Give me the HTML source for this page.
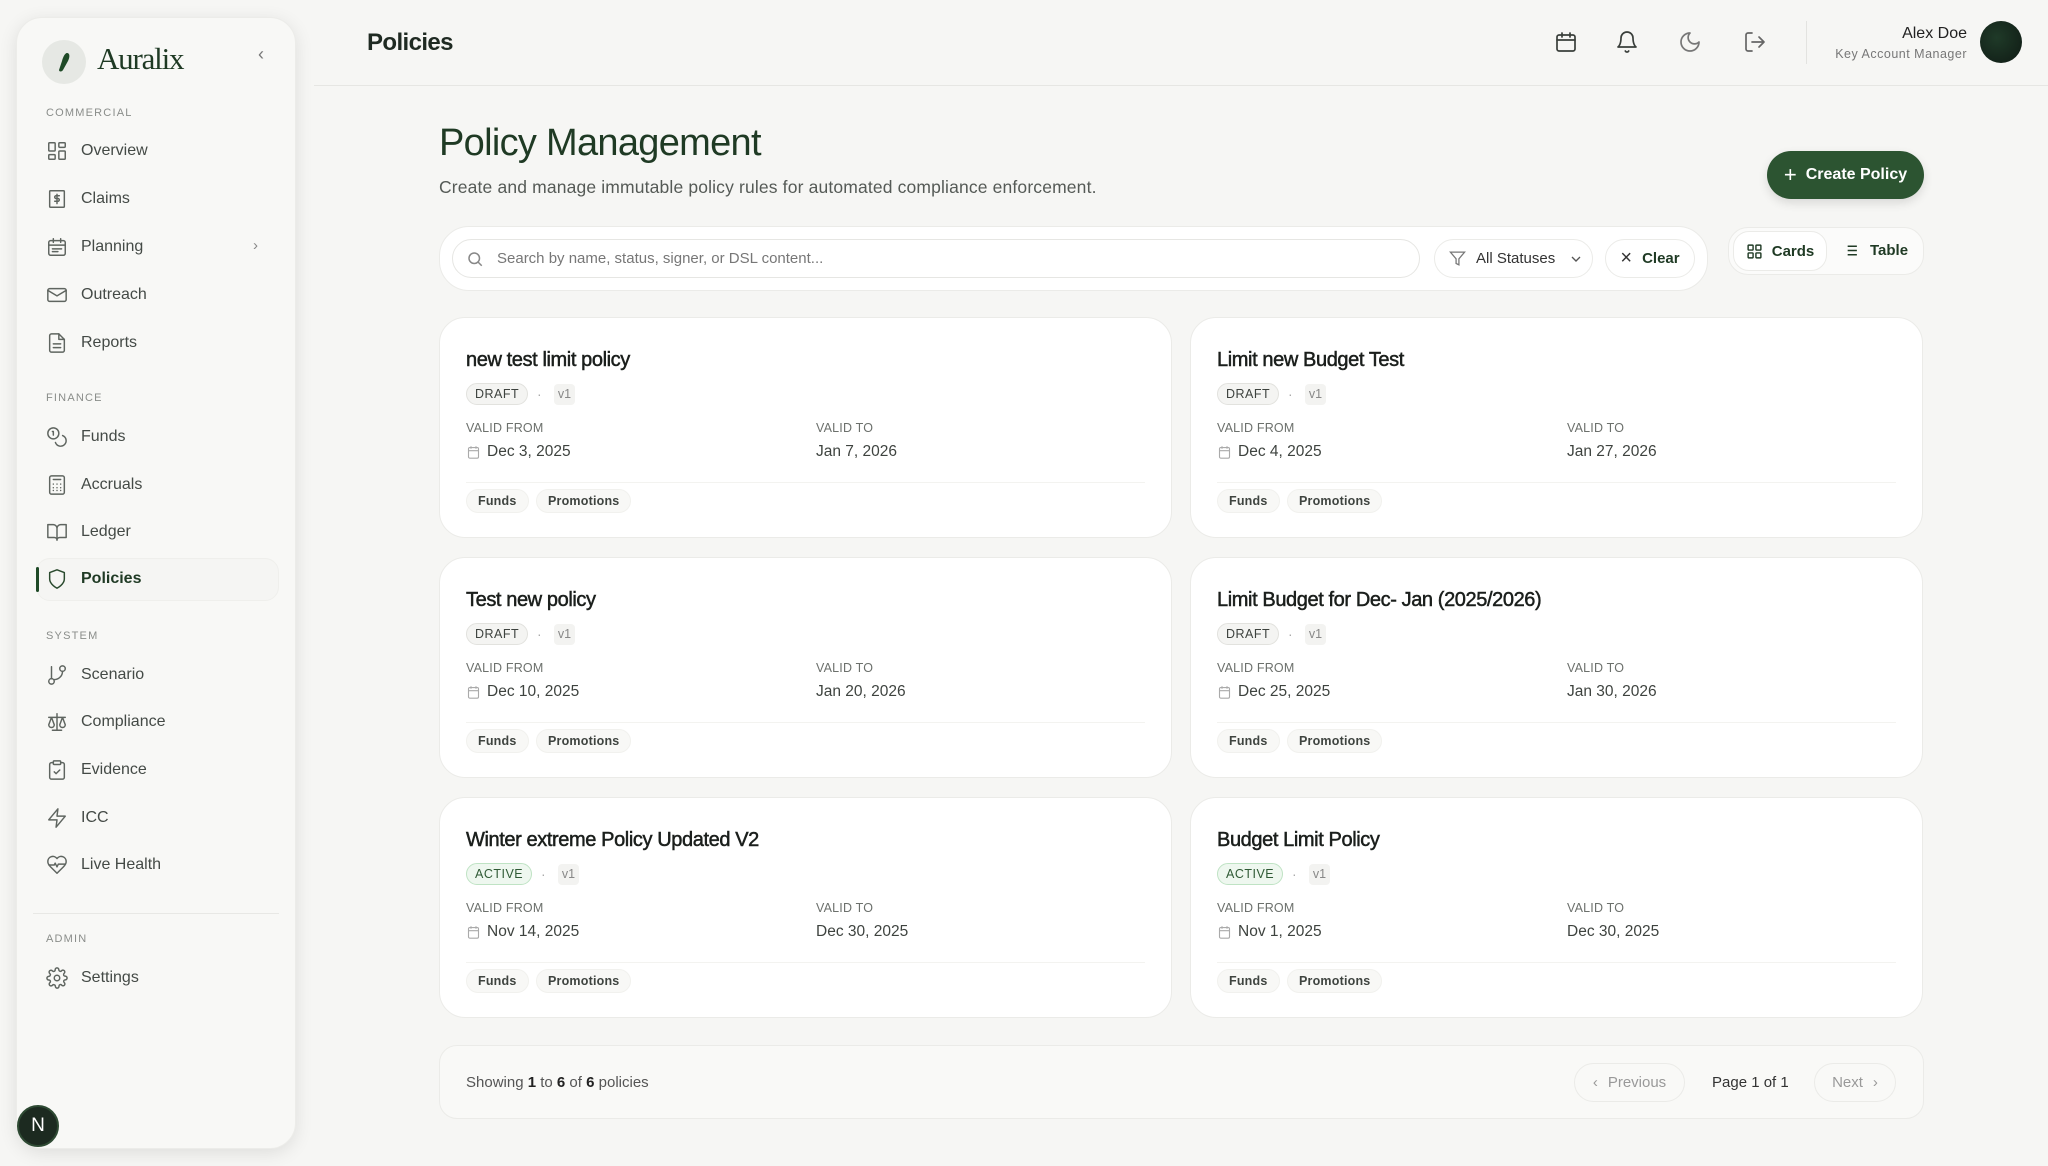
<!DOCTYPE html>
<html><head><meta charset="utf-8"><style>
*{box-sizing:border-box;margin:0;padding:0}
body{width:2048px;height:1166px;background:#f6f6f4;font-family:"Liberation Sans",sans-serif;color:#2b2f2c;position:relative;overflow:hidden}
.abs{position:absolute}
.side{left:16px;top:17px;width:280px;height:1132px;background:#f8f8f6;border-radius:26px;box-shadow:0 4px 18px rgba(0,0,0,.10);border:1px solid #ecece9}
.sec{position:absolute;left:46px;font-size:11px;letter-spacing:1.2px;color:#8a8d8a}
.item{position:absolute;left:46px;height:30px;display:flex;align-items:center;font-size:16px;color:#444a46}
.item svg{width:22px;height:22px;margin-right:13px;stroke:#5f6560;fill:none;stroke-width:1.6;stroke-linecap:round;stroke-linejoin:round}
.hdr{left:314px;top:0;width:1734px;height:86px;border-bottom:1px solid #e6e6e3}
.hicon{position:absolute;top:30px;width:24px;height:24px;fill:none;stroke:#3a3f3b;stroke-width:1.7;stroke-linecap:round;stroke-linejoin:round}
.card{position:absolute;width:733px;height:221px;background:#fff;border:1px solid #ebebe8;border-radius:26px}
.card h3{position:absolute;left:26px;top:31px;font-size:20px;font-weight:normal;color:#1b1f1c;letter-spacing:-.4px;-webkit-text-stroke:.5px #1b1f1c}
.badge{position:absolute;left:26px;top:65px;height:22px;padding:0 8px;border-radius:11px;font-size:12.5px;line-height:20px;letter-spacing:.5px;background:#f4f4f2;border:1px solid #e2e2de;color:#3d423e}
.badge.act{background:#eef7ef;border-color:#bfe3c4;color:#2f5a35}
.dot{position:absolute;top:68px;font-size:14px;color:#aaa}
.ver{position:absolute;top:66px;height:21px;width:21px;background:#f3f3f1;border-radius:4px;font-size:12.5px;color:#888;text-align:center;line-height:20px}
.lbl{position:absolute;top:103px;font-size:12.5px;color:#6c706c;letter-spacing:.2px}
.date{position:absolute;top:125px;font-size:15.5px;color:#3e433f;display:flex;align-items:center}
.date svg{width:15px;height:15px;margin-right:6px;fill:none;stroke:#aaa;stroke-width:1.8}
.hr{position:absolute;left:26px;right:26px;top:164px;border-top:1px solid #f3f3f0}
.tag{position:absolute;top:171px;height:24px;padding:0 11px;border-radius:12px;background:#f8f8f6;border:1px solid #f1f1ee;font-size:12.5px;line-height:22px;color:#3f4440;font-weight:bold;letter-spacing:.2px}
.btn{position:absolute;border:1px solid #ebebe8;background:#fff;border-radius:20px;display:flex;align-items:center;justify-content:center;font-size:15px}
</style></head><body>

<div class="abs side">
  <div class="abs" style="left:25px;top:22px;width:44px;height:44px;border-radius:50%;background:#e6e8e4"></div>
  <svg class="abs" style="left:34px;top:31px" width="26" height="26" viewBox="0 0 26 26"><path d="M16 4c3 0 3 4 1 8l-5 9c-1 2-4 2-4 0l3-9c1-4 3-8 5-8z" fill="#1f4a27"/></svg>
  <div class="abs" style="left:80px;top:23px;font-family:'Liberation Serif',serif;font-size:31px;color:#1f3a24;letter-spacing:-1.2px">Auralix</div>
  <div class="abs" style="left:241px;top:26px;font-size:18px;color:#777">‹</div>

  <div class="sec" style="top:89px;left:29px">COMMERCIAL</div>
  <div class="item" style="left:29px;top:118px"><svg viewBox="0 0 24 24"><rect x="3" y="3" width="7" height="9" rx="1"/><rect x="14" y="3" width="7" height="5" rx="1"/><rect x="14" y="12" width="7" height="9" rx="1"/><rect x="3" y="16" width="7" height="5" rx="1"/></svg>Overview</div>
  <div class="item" style="left:29px;top:166px"><svg viewBox="0 0 24 24"><rect x="4" y="3" width="16" height="18" rx="1"/><path d="M14.5 8.5h-3.5a1.5 1.5 0 0 0 0 3h2a1.5 1.5 0 0 1 0 3h-3.5M12 7v10"/></svg>Claims</div>
  <div class="item" style="left:29px;top:214px"><svg viewBox="0 0 24 24"><rect x="3" y="5" width="18" height="16" rx="2"/><path d="M8 3v4M16 3v4M3 10h18M7 14h10M7 17h6"/></svg>Planning</div>
  <div class="abs" style="left:236px;top:219px;font-size:15px;color:#888">›</div>
  <div class="item" style="left:29px;top:262px"><svg viewBox="0 0 24 24"><rect x="2" y="5" width="20" height="14" rx="2"/><path d="M2 7l10 6 10-6"/></svg>Outreach</div>
  <div class="item" style="left:29px;top:310px"><svg viewBox="0 0 24 24"><path d="M14 2H6a2 2 0 0 0-2 2v16a2 2 0 0 0 2 2h12a2 2 0 0 0 2-2V8z"/><path d="M14 2v6h6M8 13h8M8 17h8"/></svg>Reports</div>

  <div class="sec" style="top:374px;left:29px">FINANCE</div>
  <div class="item" style="left:29px;top:404px"><svg viewBox="0 0 24 24"><circle cx="8" cy="8" r="6"/><path d="M18.1 10.4A6 6 0 1 1 10.3 18M7 6h1v4"/></svg>Funds</div>
  <div class="item" style="left:29px;top:452px"><svg viewBox="0 0 24 24"><rect x="4" y="2" width="16" height="20" rx="2"/><path d="M8 6h8M8 11h.01M12 11h.01M16 11h.01M8 15h.01M12 15h.01M16 15h.01M8 18h.01M12 18h.01M16 18h.01"/></svg>Accruals</div>
  <div class="item" style="left:29px;top:499px"><svg viewBox="0 0 24 24"><path d="M2 4h6a4 4 0 0 1 4 4v13a3 3 0 0 0-3-3H2zM22 4h-6a4 4 0 0 0-4 4v13a3 3 0 0 1 3-3h7z"/></svg>Ledger</div>
  <div class="abs" style="left:19px;top:540px;width:243px;height:43px;border-radius:14px;background:#f5f5f3;border:1px solid #efefec"></div>
  <div class="abs" style="left:19px;top:549px;width:3px;height:25px;background:#1f4a27;border-radius:2px"></div>
  <div class="item" style="left:29px;top:546px;color:#1f3a24;font-weight:bold"><svg viewBox="0 0 24 24" style="stroke:#2a4a2e"><path d="M12 22s8-4 8-10V5l-8-3-8 3v7c0 6 8 10 8 10z"/></svg>Policies</div>

  <div class="sec" style="top:612px;left:29px">SYSTEM</div>
  <div class="item" style="left:29px;top:642px"><svg viewBox="0 0 24 24"><circle cx="6" cy="19" r="3"/><circle cx="18" cy="5" r="3"/><path d="M6 3v13M18 8a9 9 0 0 1-9 9"/></svg>Scenario</div>
  <div class="item" style="left:29px;top:689px"><svg viewBox="0 0 24 24"><path d="M12 3v18M7 21h10M3 7h18M6 7l-3 8a3 3 0 0 0 6 0zM18 7l-3 8a3 3 0 0 0 6 0z"/></svg>Compliance</div>
  <div class="item" style="left:29px;top:737px"><svg viewBox="0 0 24 24"><rect x="8" y="2" width="8" height="4" rx="1"/><path d="M16 4h2a2 2 0 0 1 2 2v14a2 2 0 0 1-2 2H6a2 2 0 0 1-2-2V6a2 2 0 0 1 2-2h2M9 14l2 2 4-4"/></svg>Evidence</div>
  <div class="item" style="left:29px;top:785px"><svg viewBox="0 0 24 24"><path d="M13 2L3 14h9l-1 8 10-12h-9z"/></svg>ICC</div>
  <div class="item" style="left:29px;top:832px"><svg viewBox="0 0 24 24"><path d="M19 14c1.5-1.5 3-3.2 3-5.5A5.5 5.5 0 0 0 12 5 5.5 5.5 0 0 0 2 8.5c0 2.3 1.5 4 3 5.5l7 7z"/><path d="M3.2 12H9l1-2 2 4 1.5-3H21"/></svg>Live Health</div>
  <div class="abs" style="left:16px;top:895px;width:246px;border-top:1px solid #e8e8e5"></div>
  <div class="sec" style="top:915px;left:29px">ADMIN</div>
  <div class="item" style="left:29px;top:945px"><svg viewBox="0 0 24 24"><circle cx="12" cy="12" r="3"/><path d="M19.4 15a1.6 1.6 0 0 0 .3 1.8l.1.1a2 2 0 1 1-2.8 2.8l-.1-.1a1.6 1.6 0 0 0-2.7 1.1V21a2 2 0 1 1-4 0v-.1A1.6 1.6 0 0 0 9 19.4a1.6 1.6 0 0 0-1.8.3l-.1.1a2 2 0 1 1-2.8-2.8l.1-.1a1.6 1.6 0 0 0-1.1-2.7H3a2 2 0 1 1 0-4h.1A1.6 1.6 0 0 0 4.6 9a1.6 1.6 0 0 0-.3-1.8l-.1-.1a2 2 0 1 1 2.8-2.8l.1.1a1.6 1.6 0 0 0 1.800.3H9a1.6 1.6 0 0 0 1-1.5V3a2 2 0 1 1 4 0v.1a1.6 1.6 0 0 0 1 1.5 1.6 1.6 0 0 0 1.8-.3l.1-.1a2 2 0 1 1 2.8 2.8l-.1.1a1.6 1.6 0 0 0-.3 1.8V9a1.6 1.6 0 0 0 1.5 1H21a2 2 0 1 1 0 4h-.1a1.6 1.6 0 0 0-1.5 1z"/></svg>Settings</div>
</div>
<div class="abs" style="left:17px;top:1105px;width:42px;height:42px;border-radius:50%;background:#1c2a20;border:2px solid #2e4a33;color:#fff;font-size:19px;text-align:center;line-height:38px">N</div>

<div class="abs hdr"></div>
<div class="abs" style="left:367px;top:29px;font-size:24px;font-weight:bold;color:#1f2a22;letter-spacing:-.6px">Policies</div>
<svg class="hicon" style="left:1554px" viewBox="0 0 24 24"><rect x="3" y="5" width="18" height="16" rx="2"/><path d="M8 3v4M16 3v4M3 10h18"/></svg>
<svg class="hicon" style="left:1615px" viewBox="0 0 24 24"><path d="M6 8a6 6 0 0 1 12 0c0 7 3 9 3 9H3s3-2 3-9M10.3 21a1.9 1.9 0 0 0 3.4 0"/></svg>
<svg class="hicon" style="left:1678px;stroke:#777" viewBox="0 0 24 24"><path d="M12 3a6 6 0 0 0 9 9 9 9 0 1 1-9-9z"/></svg>
<svg class="hicon" style="left:1743px;stroke:#666" viewBox="0 0 24 24"><path d="M9 21H5a2 2 0 0 1-2-2V5a2 2 0 0 1 2-2h4M16 17l5-5-5-5M21 12H9"/></svg>
<div class="abs" style="left:1806px;top:21px;height:43px;border-left:1px solid #e3e3e0"></div>
<div class="abs" style="right:81px;top:25px;font-size:16px;color:#222;text-align:right">Alex Doe</div>
<div class="abs" style="right:81px;top:47px;font-size:12.5px;color:#777;text-align:right;letter-spacing:.5px">Key Account Manager</div>
<div class="abs" style="left:1980px;top:21px;width:42px;height:42px;border-radius:50%;background:radial-gradient(circle at 40% 40%,#1f3a28,#0f1a14)"></div>

<div class="abs" style="left:439px;top:122px;font-size:38px;color:#1f3a24;letter-spacing:-.7px">Policy Management</div>
<div class="abs" style="left:439px;top:177px;font-size:17.5px;color:#555a56;letter-spacing:.15px">Create and manage immutable policy rules for automated compliance enforcement.</div>
<div class="abs" style="left:1767px;top:151px;width:157px;height:48px;border-radius:24px;background:#2c5431;color:#fff;font-size:16px;font-weight:bold;display:flex;align-items:center;justify-content:center;box-shadow:0 4px 10px rgba(0,0,0,.12)"><span style="font-size:22px;font-weight:normal;margin-right:9px">+</span>Create Policy</div>

<div class="abs" style="left:439px;top:226px;width:1269px;height:65px;border-radius:30px;background:#fff;border:1px solid #ebebe8"></div>
<div class="abs" style="left:452px;top:239px;width:968px;height:39px;border-radius:20px;border:1px solid #e6e6e3;background:#fff"></div>
<svg class="abs" style="left:466px;top:250px" width="18" height="18" viewBox="0 0 24 24" fill="none" stroke="#888" stroke-width="2"><circle cx="11" cy="11" r="7"/><path d="M21 21l-5-5"/></svg>
<div class="abs" style="left:497px;top:250px;font-size:15px;color:#777">Search by name, status, signer, or DSL content...</div>
<div class="btn" style="left:1434px;top:239px;width:159px;height:39px;justify-content:flex-start;padding-left:14px;color:#333"><svg width="17" height="17" viewBox="0 0 24 24" fill="none" stroke="#777" stroke-width="1.8" style="margin-right:10px"><path d="M22 3H2l8 9.5V19l4 2v-8.5z"/></svg>All Statuses<svg width="16" height="16" viewBox="0 0 24 24" fill="none" stroke="#555" stroke-width="2" style="margin-left:13px"><path d="M6 9l6 6 6-6"/></svg></div>
<div class="btn" style="left:1605px;top:239px;width:90px;height:39px;color:#1f3a24;font-weight:bold"><span style="font-weight:normal;font-size:20px;margin-right:10px;color:#333">×</span>Clear</div>

<div class="abs" style="left:1728px;top:227px;width:196px;height:48px;border-radius:20px;background:#fbfbfa;border:1px solid #ebebe8"></div>
<div class="btn" style="left:1733px;top:231px;width:94px;height:40px;border-radius:16px;color:#1f3a24;font-weight:bold"><svg width="17" height="17" viewBox="0 0 24 24" fill="none" stroke="#1f3a24" stroke-width="2" style="margin-right:9px"><rect x="3" y="3" width="7" height="7" rx="1"/><rect x="14" y="3" width="7" height="7" rx="1"/><rect x="3" y="14" width="7" height="7" rx="1"/><rect x="14" y="14" width="7" height="7" rx="1"/></svg>Cards</div>
<div class="abs" style="left:1842px;top:242px;font-size:15px;color:#1f3a24;font-weight:bold;display:flex;align-items:center"><svg width="17" height="17" viewBox="0 0 24 24" fill="none" stroke="#1f3a24" stroke-width="2" style="margin-right:11px"><path d="M8 6h13M8 12h13M8 18h13M3 6h.01M3 12h.01M3 18h.01"/></svg>Table</div>

<!-- cards -->
<div class="card" style="left:439px;top:317px"><h3>new test limit policy</h3><div class="badge">DRAFT</div><div class="dot" style="left:97px">·</div><div class="ver" style="left:114px">v1</div><div class="lbl" style="left:26px">VALID FROM</div><div class="lbl" style="left:376px">VALID TO</div><div class="date" style="left:26px"><svg viewBox="0 0 24 24"><rect x="4" y="4" width="16" height="17" rx="2"/><path d="M8 2v4M16 2v4M4 9h16"/></svg>Dec 3, 2025</div><div class="date" style="left:376px">Jan 7, 2026</div><div class="hr"></div><div class="tag" style="left:26px">Funds</div><div class="tag" style="left:96px">Promotions</div></div>
<div class="card" style="left:1190px;top:317px"><h3>Limit new Budget Test</h3><div class="badge">DRAFT</div><div class="dot" style="left:97px">·</div><div class="ver" style="left:114px">v1</div><div class="lbl" style="left:26px">VALID FROM</div><div class="lbl" style="left:376px">VALID TO</div><div class="date" style="left:26px"><svg viewBox="0 0 24 24"><rect x="4" y="4" width="16" height="17" rx="2"/><path d="M8 2v4M16 2v4M4 9h16"/></svg>Dec 4, 2025</div><div class="date" style="left:376px">Jan 27, 2026</div><div class="hr"></div><div class="tag" style="left:26px">Funds</div><div class="tag" style="left:96px">Promotions</div></div>
<div class="card" style="left:439px;top:557px"><h3>Test new policy</h3><div class="badge">DRAFT</div><div class="dot" style="left:97px">·</div><div class="ver" style="left:114px">v1</div><div class="lbl" style="left:26px">VALID FROM</div><div class="lbl" style="left:376px">VALID TO</div><div class="date" style="left:26px"><svg viewBox="0 0 24 24"><rect x="4" y="4" width="16" height="17" rx="2"/><path d="M8 2v4M16 2v4M4 9h16"/></svg>Dec 10, 2025</div><div class="date" style="left:376px">Jan 20, 2026</div><div class="hr"></div><div class="tag" style="left:26px">Funds</div><div class="tag" style="left:96px">Promotions</div></div>
<div class="card" style="left:1190px;top:557px"><h3>Limit Budget for Dec- Jan (2025/2026)</h3><div class="badge">DRAFT</div><div class="dot" style="left:97px">·</div><div class="ver" style="left:114px">v1</div><div class="lbl" style="left:26px">VALID FROM</div><div class="lbl" style="left:376px">VALID TO</div><div class="date" style="left:26px"><svg viewBox="0 0 24 24"><rect x="4" y="4" width="16" height="17" rx="2"/><path d="M8 2v4M16 2v4M4 9h16"/></svg>Dec 25, 2025</div><div class="date" style="left:376px">Jan 30, 2026</div><div class="hr"></div><div class="tag" style="left:26px">Funds</div><div class="tag" style="left:96px">Promotions</div></div>
<div class="card" style="left:439px;top:797px"><h3>Winter extreme Policy Updated V2</h3><div class="badge act">ACTIVE</div><div class="dot" style="left:101px">·</div><div class="ver" style="left:118px">v1</div><div class="lbl" style="left:26px">VALID FROM</div><div class="lbl" style="left:376px">VALID TO</div><div class="date" style="left:26px"><svg viewBox="0 0 24 24"><rect x="4" y="4" width="16" height="17" rx="2"/><path d="M8 2v4M16 2v4M4 9h16"/></svg>Nov 14, 2025</div><div class="date" style="left:376px">Dec 30, 2025</div><div class="hr"></div><div class="tag" style="left:26px">Funds</div><div class="tag" style="left:96px">Promotions</div></div>
<div class="card" style="left:1190px;top:797px"><h3>Budget Limit Policy</h3><div class="badge act">ACTIVE</div><div class="dot" style="left:101px">·</div><div class="ver" style="left:118px">v1</div><div class="lbl" style="left:26px">VALID FROM</div><div class="lbl" style="left:376px">VALID TO</div><div class="date" style="left:26px"><svg viewBox="0 0 24 24"><rect x="4" y="4" width="16" height="17" rx="2"/><path d="M8 2v4M16 2v4M4 9h16"/></svg>Nov 1, 2025</div><div class="date" style="left:376px">Dec 30, 2025</div><div class="hr"></div><div class="tag" style="left:26px">Funds</div><div class="tag" style="left:96px">Promotions</div></div>

<div class="abs" style="left:439px;top:1045px;width:1485px;height:74px;border-radius:18px;background:#f9f9f7;border:1px solid #ebebe8"></div>
<div class="abs" style="left:466px;top:1074px;font-size:15px;color:#555">Showing <b style="color:#222">1</b> to <b style="color:#222">6</b> of <b style="color:#222">6</b> policies</div>
<div class="btn" style="left:1574px;top:1063px;width:111px;height:39px;background:#f9f9f7;color:#999"><span style="margin-right:10px">‹</span>Previous</div>
<div class="abs" style="left:1712px;top:1074px;font-size:15px;color:#333">Page 1 of 1</div>
<div class="btn" style="left:1814px;top:1063px;width:82px;height:39px;background:#f9f9f7;color:#999">Next<span style="margin-left:10px">›</span></div>
</body></html>
